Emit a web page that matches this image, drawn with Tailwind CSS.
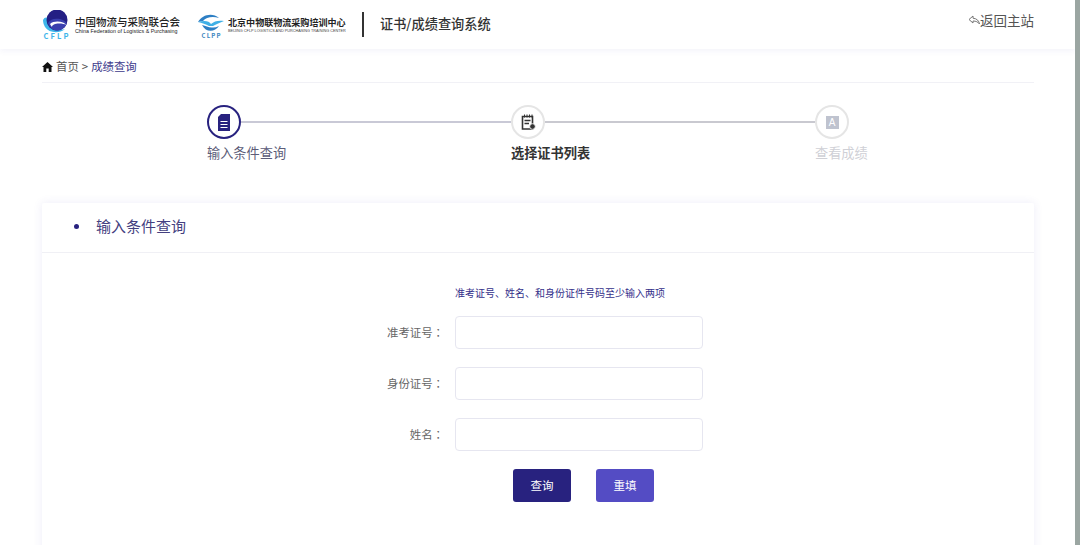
<!DOCTYPE html>
<html lang="zh-CN">

<head>
    <meta charset="UTF-8">
    <meta name="viewport" content="width=device-width, initial-scale=1.0">
    <title>证书/成绩查询系统</title>
    <script src="https://cdn.jsdelivr.net/npm/@tailwindcss/browser@4"></script>
</head>

<body class="bg-white overflow-hidden font-['Noto_Sans_CJK_SC','Noto_Sans',sans-serif]">
    <div class="flex h-[545px] w-[1080px] overflow-hidden">
        <div class="w-[1075px] h-full overflow-hidden">

            <!-- header -->
            <header class="h-[49px] bg-white flex items-center pl-[42px] pr-[41px] shadow-[0_2px_6px_rgba(90,80,190,0.07)] relative">
                <svg class="w-[28px] h-[30px] mt-[1px]" viewBox="0 0 28 30">
                    <path d="M1 10 C3 6 6 7 8 11 C10 17 17 21 23 19 C17 24 7 23 3 17 C2 15 1 13 1 10Z" fill="#3fb6ea"/>
                    <circle cx="15" cy="10" r="10.5" fill="#241f84"/>
                    <path d="M6 13 C8 9 13 8 18 9 C22 10 25 12 24.5 14 C23 18 19 20.5 15 20.5 C11 20.5 8 18 6 13Z" fill="#3a3fae"/>
                    <path d="M8 14 C11 11 17 11 21 12.5 C23 13.5 24 14.5 24 15 C23 14 20 13.5 17 13.5 C13 13.5 10 15 10 17 C9 16 8.5 15 8 14Z" fill="#ffffff"/>
                    <text x="1.5" y="29" font-size="7.5" font-weight="700" fill="#3fb6ea" textLength="25">CFLP</text>
                </svg>
                <div class="ml-[5px] w-[111px] mt-[2px] text-[#222] leading-none">
                    <div class="text-[10.5px] font-medium whitespace-nowrap">中国物流与采购联合会</div>
                    <div class="text-[5.35px] font-medium whitespace-nowrap mt-[2px] font-['Liberation_Sans',sans-serif]">China Federation of Logistics &amp; Purchasing</div>
                </div>
                <svg class="w-[28px] h-[26px] ml-[11px] mt-[2px]" viewBox="0 0 28 26">
                    <path d="M1 9 C5 2 15 -1 22 5 C16 3 9 4 6 8 L1 9Z" fill="#2d7fc4"/>
                    <path d="M1 9 C8 7 12 8 14 11 C17 8 22 7 27 8 C23 10 19 11 16 13 L12 13 C9 11 5 10 1 9Z" fill="#3fb0e6"/>
                    <path d="M5 12 C9 13 12 15 16 14.5 C18 14.5 20 14 22 13 C18 19 9 20 5 12Z" fill="#2d7fc4"/>
                    <text x="4.5" y="25" font-size="6" font-weight="700" fill="#3a86c0" textLength="19">CLPP</text>
                </svg>
                <div class="ml-[3px] w-[118px] mt-[2px] text-[#222] leading-none">
                    <div class="text-[9.05px] font-bold whitespace-nowrap">北京中物联物流采购培训中心</div>
                    <div class="text-[3.8px] whitespace-nowrap mt-[3px] text-[#444] font-['Liberation_Sans',sans-serif]">BEIJING CFLP LOGISTICS AND PURCHASING TRAINING CENTER</div>
                </div>
                <div class="ml-[16px] w-[2px] h-[25px] bg-[#333]"></div>
                <div class="ml-[16px] mb-[2px] text-[13.2px] font-medium text-[#333] whitespace-nowrap">证书/成绩查询系统</div>
                <div class="ml-auto flex items-center text-[13.5px] text-[#555] self-start mt-[11px] leading-[18px]">
                    <svg class="w-[12px] h-[10px]" viewBox="0 0 12 10" fill="none" stroke="#777" stroke-width="1">
                        <path d="M5 1 L1 4.5 L5 8 V6 C8 6 10 7 11.5 9 C11 6 9 3.5 5 3.2Z"/>
                    </svg>
                    <span>返回主站</span>
                </div>
            </header>

            <main class="px-[41px] pl-[42px]">
                <!-- breadcrumb -->
                <div class="h-[34px] flex items-center border-b border-[#f1f1f6] text-[11.4px] text-[#555] pt-[2px]">
                    <svg class="w-[11px] h-[10px] mr-[3px]" viewBox="0 0 11 10">
                        <path d="M5.5 0 L11 5 H9.5 V10 H6.7 V6.5 H4.3 V10 H1.5 V5 H0 Z" fill="#111"/>
                    </svg>
                    <span>首页</span>
                    <span class="mx-[3px]">&gt;</span>
                    <span class="text-[#3d3a8c]">成绩查询</span>
                </div>

                <!-- steps -->
                <div class="flex ml-[165px] mt-[22px] h-[98px]">
                    <div class="w-[304px]">
                        <div class="flex items-center">
                            <div class="w-[34px] h-[34px] shrink-0 rounded-full border-2 border-[#28227f] flex items-center justify-center">
                                <svg class="w-[14px] h-[17px]" viewBox="0 0 14 17">
                                    <path d="M4 0 H13 V17 H1 V3 Z" fill="#28227f"/>
                                    <path d="M3.5 7.5 H10.5 M3.5 10.5 H10.5 M3.5 13.5 H10.5" stroke="#fff" stroke-width="1.2"/>
                                </svg>
                            </div>
                            <div class="flex-1 h-[1.5px] bg-[#c9c9d6]"></div>
                        </div>
                        <div class="mt-[4px] text-[13.2px] leading-[20px] text-[#5c5c78]">输入条件查询</div>
                    </div>
                    <div class="w-[304px]">
                        <div class="flex items-center">
                            <div class="w-[34px] h-[34px] shrink-0 rounded-full border-2 border-[#e5e5e5] flex items-center justify-center">
                                <svg class="w-[15px] h-[16px]" viewBox="0 0 15 16">
                                    <path d="M1.5 2.5 H11.5 V15 H1.5 Z" fill="none" stroke="#333" stroke-width="1.6"/>
                                    <path d="M3.5 0.5 V3.5 M6 0.5 V3.5 M8.5 0.5 V3.5 M11 0.5 V3.5" stroke="#333" stroke-width="1"/>
                                    <path d="M3.5 6.5 H9.5 M3.5 9.5 H8" stroke="#333" stroke-width="1.3"/>
                                    <circle cx="11.5" cy="12.5" r="2.8" fill="#333" stroke="#fff" stroke-width="0.8"/>
                                </svg>
                            </div>
                            <div class="flex-1 h-[1.5px] bg-[#c9c9d0]"></div>
                        </div>
                        <div class="mt-[4px] text-[13.2px] leading-[20px] font-bold text-[#333]">选择证书列表</div>
                    </div>
                    <div class="w-[80px]">
                        <div class="w-[34px] h-[34px] rounded-full border-2 border-[#e5e5e5] flex items-center justify-center">
                            <div class="w-[13px] h-[13px] bg-[#bfc3cf] text-white text-[10px] leading-[13px] text-center font-['Liberation_Sans',sans-serif]">A</div>
                        </div>
                        <div class="mt-[4px] text-[13.2px] leading-[20px] text-[#cfd0d6] whitespace-nowrap">查看成绩</div>
                    </div>
                </div>

                <!-- query card -->
                <section class="h-[400px] bg-white rounded-[2px] shadow-[0_0_10px_rgba(80,70,190,0.1)]">
                    <div class="h-[50px] border-b border-[#f0f0f5] flex items-center pl-[32px] pb-[2px]">
                        <span class="w-[5px] h-[5px] rounded-full bg-[#28227f]"></span>
                        <span class="ml-[17px] text-[15px] text-[#444080]">输入条件查询</span>
                    </div>
                    <div class="pt-[33px]">
                        <p class="ml-[413px] text-[10px] leading-[14px] text-[#34308a]">准考证号、姓名、和身份证件号码至少输入两项</p>
                        <div class="mt-[16px] flex flex-col gap-[18px]">
                            <label class="flex items-center">
                                <span class="w-[402px] text-right text-[11.4px] text-[#666]">准考证号<span lang="zh-TW" class="font-['Noto_Sans_CJK_TC']">：</span></span>
                                <input class="ml-[11px] w-[248px] h-[33px] bg-white border border-[#e6e6f0] rounded-[4px]" type="text">
                            </label>
                            <label class="flex items-center">
                                <span class="w-[402px] text-right text-[11.4px] text-[#666]">身份证号<span lang="zh-TW" class="font-['Noto_Sans_CJK_TC']">：</span></span>
                                <input class="ml-[11px] w-[248px] h-[33px] bg-white border border-[#e6e6f0] rounded-[4px]" type="text">
                            </label>
                            <label class="flex items-center">
                                <span class="w-[402px] text-right text-[11.4px] text-[#666]">姓名<span lang="zh-TW" class="font-['Noto_Sans_CJK_TC']">：</span></span>
                                <input class="ml-[11px] w-[248px] h-[33px] bg-white border border-[#e6e6f0] rounded-[4px]" type="text">
                            </label>
                        </div>
                        <div class="mt-[18px] ml-[471px] flex gap-[25px]">
                            <button class="w-[58px] h-[33px] bg-[#28227f] text-white text-[11.5px] rounded-[3px]">查询</button>
                            <button class="w-[58px] h-[33px] bg-[#544cc4] text-white text-[11.5px] rounded-[3px]">重填</button>
                        </div>
                    </div>
                </section>
            </main>
        </div>
        <div class="w-[5px] h-full bg-[#9ba6a2]"></div>
    </div>
</body>

</html>
